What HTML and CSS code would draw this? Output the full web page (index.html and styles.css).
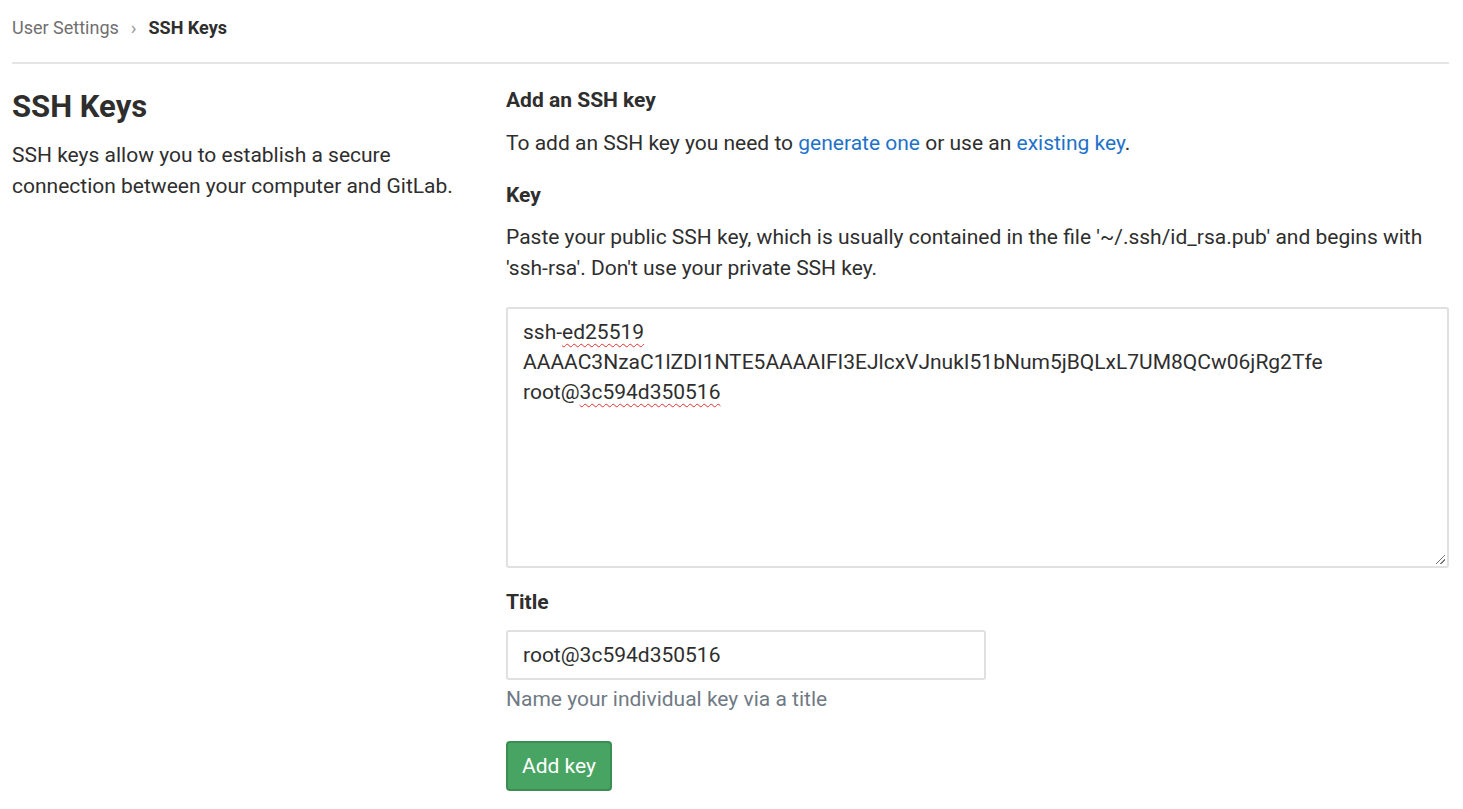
FILE: index.html
```html
<!DOCTYPE html>
<html lang="en">
<head>
  <meta charset="UTF-8">
  <title>SSH Keys · User Settings</title>
  <link rel="stylesheet" href="styles.css">
</head>
<body>
  <div class="page">
    <div class="breadcrumbs">
      <a href="#" class="crumb">User Settings</a>
      <span class="crumb-sep">&#8250;</span>
      <span class="crumb-current">SSH Keys</span>
    </div>

    <div class="settings-row">
      <div class="settings-side">
        <h1>SSH Keys</h1>
        <p>SSH keys allow you to establish a secure connection between your computer and GitLab.</p>
      </div>

      <div class="settings-main">
        <h2>Add an SSH key</h2>
        <p>To add an SSH key you need to <a href="#">generate one</a> or use an <a href="#">existing key</a>.</p>

        <form class="key-form">
          <label class="field-label">Key</label>
          <p class="field-desc">Paste your public SSH key, which is usually contained in the file '~/.ssh/id_rsa.pub' and begins with 'ssh-rsa'. Don't use your private SSH key.</p>
          <div class="key-box">
            <div>ssh-<span class="typo">ed25519</span></div>
            <div>AAAAC3NzaC1lZDI1NTE5AAAAIFI3EJlcxVJnukI51bNum5jBQLxL7UM8QCw06jRg2Tfe</div>
            <div>root@<span class="typo">3c594d350516</span></div>
            <span class="grip"></span>
          </div>

          <label class="field-label title-label">Title</label>
          <input class="title-input" type="text" value="root@3c594d350516">
          <p class="help">Name your individual key via a title</p>

          <button type="button" class="btn-success">Add key</button>
        </form>
      </div>
    </div>
  </div>
</body>
</html>
```

FILE: styles.css
```css
* { box-sizing: border-box; }

body {
  margin: 0;
  background: #fff;
  color: #2e2e2e;
  font-family: Roboto, "Liberation Sans", sans-serif;
  font-size: 21px;
}

.page { padding: 0 14px 0 12px; }

/* Breadcrumbs */
.breadcrumbs {
  display: flex;
  align-items: center;
  height: 64px;
  padding-bottom: 8px;
  border-bottom: 2px solid #e5e5e5;
  font-size: 18px;
}
.crumb { color: #707070; text-decoration: none; }
.crumb-sep { color: #9a9a9a; margin: 0 12px 0 12px; font-size: 19px; }
.crumb-current { font-weight: 700; color: #2e2e2e; }

/* Settings section */
.settings-row { display: flex; }
.settings-side { width: 494px; padding-right: 30px; }
.settings-main { flex: 1; padding-top: 25px; }

h1 {
  margin: 25px 0 15px;
  font-size: 31px;
  font-weight: 700;
  line-height: 36px;
}
.settings-side p { margin: 0; line-height: 31px; }

h2 {
  margin: 0 0 17px;
  font-size: 21px;
  font-weight: 700;
  line-height: 22px;
}
.settings-main p { margin: 0; line-height: 31px; }
.settings-main a { color: #1f72c9; text-decoration: none; }

.field-label {
  display: block;
  margin: 25px 0 16px;
  font-weight: 700;
  line-height: 22px;
}
.field-desc { margin-bottom: 23px !important; }

.key-box {
  position: relative;
  height: 261px;
  padding: 8px 15px;
  border: 2px solid #e0e0e0;
  border-radius: 3px;
  line-height: 30px;
  color: #2e2e2e;
}
.typo {
  text-decoration: underline wavy #e0312f;
  text-decoration-thickness: 1px;
  text-underline-offset: 4px;
}
.grip {
  position: absolute;
  right: 2px;
  bottom: 2px;
  width: 9px;
  height: 9px;
  background: linear-gradient(135deg, transparent 45%, #777 45%, #777 55%, transparent 55%, transparent 70%, #777 70%, #777 80%, transparent 80%);
}

.title-label { margin: 23px 0 17px; }

.title-input {
  display: block;
  width: 480px;
  height: 50px;
  padding: 0 15px;
  border: 2px solid #e0e0e0;
  border-radius: 3px;
  font-family: inherit;
  font-size: 21px;
  color: #2e2e2e;
}
.help { color: #707a84; margin-top: 4px !important; }

.btn-success {
  margin-top: 26px;
  height: 50px;
  padding: 0 14px;
  border: 2px solid #3b8d52;
  border-radius: 4px;
  background: #48a463;
  color: #fff;
  font-family: inherit;
  font-size: 21px;
}
```
